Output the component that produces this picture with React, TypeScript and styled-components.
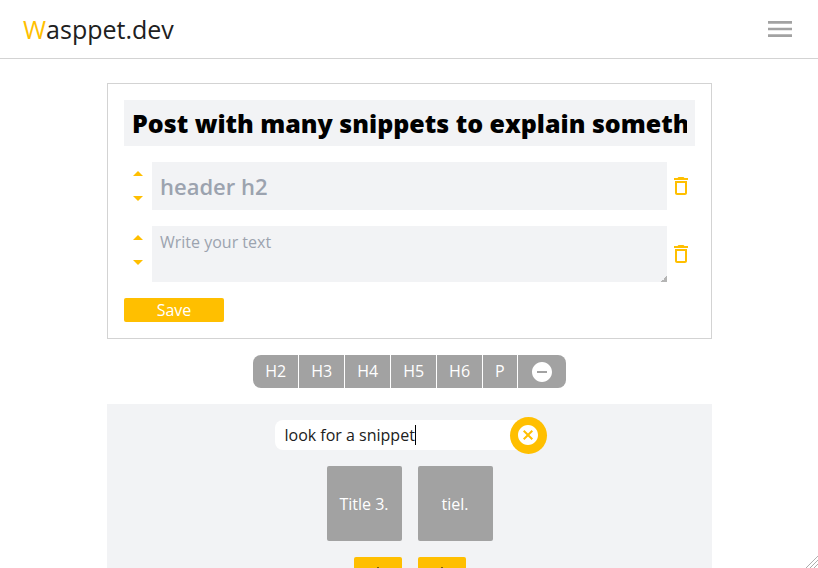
import React, { useState } from 'react';
import styled, { createGlobalStyle } from 'styled-components';
import {
  MdArrowBack,
  MdArrowDropDown,
  MdArrowDropUp,
  MdArrowForward,
  MdCancel,
  MdDeleteOutline,
  MdMenu,
  MdRemoveCircle,
} from 'react-icons/md';

const yellow = '#ffbf00';
const gray = '#a2a2a2';
const light = '#f2f3f5';
const line = '#d3d3d3';

const GlobalStyle = createGlobalStyle`
  *, *::before, *::after { box-sizing: border-box; }
  body {
    margin: 0;
    background: #fff;
    color: #202020;
    font-family: "Open Sans", "Noto Sans", sans-serif;
    font-size: 16px;
    line-height: 24px;
  }
  button, input, textarea { font: inherit; }
  button { border: 0; padding: 0; cursor: pointer; }
  svg { display: block; }
`;

const Page = styled.div`
  position: relative;
  height: 100vh;
  overflow: hidden;
`;

const Header = styled.header`
  display: flex;
  align-items: center;
  justify-content: space-between;
  padding: 12px 22px 12px 23px;
  border-bottom: 1px solid ${line};
`;

const Logo = styled.a`
  color: inherit;
  font-size: 25px;
  line-height: 34px;
  text-decoration: none;
`;

const LogoInitial = styled.span`
  color: ${yellow};
`;

const IconButton = styled.button<{ $color?: string }>`
  flex: none;
  background: none;
  color: ${({ $color }) => $color ?? yellow};
`;

const Main = styled.main`
  display: flex;
  flex-direction: column;
  align-items: center;
  gap: 16px;
  padding: 24px 106px 0 107px;
`;

const Editor = styled.form`
  display: flex;
  flex-direction: column;
  align-items: flex-start;
  gap: 16px;
  width: 100%;
  padding: 16px;
  border: 1px solid ${line};
`;

const TitleInput = styled.input`
  width: 100%;
  height: 46px;
  padding: 0 8px;
  border: 0;
  outline: 0;
  background: ${light};
  color: #000;
  font-size: 25px;
  font-weight: 800;
`;

const Row = styled.div`
  display: grid;
  grid-template-columns: 28px 1fr 28px;
  width: 100%;
  justify-items: center;
  align-items: center;
`;

const Movers = styled.div`
  display: flex;
  flex-direction: column;
  align-self: start;
`;

const HeadingInput = styled.input`
  width: 100%;
  height: 48px;
  padding: 0 8px;
  border: 0;
  outline: 0;
  background: ${light};
  font-size: 22px;
  font-weight: 600;
  &::placeholder { color: #9ca3af; }
`;

const TextArea = styled.textarea`
  display: block;
  width: 100%;
  height: 56px;
  padding: 4px 8px;
  border: 0;
  outline: 0;
  background: ${light};
  resize: vertical;
  &::placeholder { color: #9ca3af; }
  &::-webkit-resizer {
    background: linear-gradient(135deg, transparent 50%, #b4b4b4 50%) right bottom / 6px 6px no-repeat;
  }
`;

const SaveButton = styled.button`
  width: 100px;
  height: 24px;
  border-radius: 2px;
  background: ${yellow};
  color: #fff;
`;

const Toolbar = styled.div`
  display: flex;
  height: 33px;
  border-radius: 8px;
  overflow: hidden;
  background: ${gray};
`;

const Tool = styled.button<{ $icon?: boolean }>`
  padding: ${({ $icon }) => ($icon ? '5px 12px 4px' : '4px 12px 5px')};
  background: none;
  color: #fff;
  & + & { border-left: 1px solid #fff; }
`;

const Snippets = styled.section`
  display: flex;
  flex-direction: column;
  align-items: center;
  gap: 16px;
  width: 100%;
  padding: 16px;
  background: ${light};
`;

const Search = styled.div`
  position: relative;
  display: flex;
  align-items: center;
  height: 30px;
  margin-left: 2px;
`;

const SearchInput = styled.input<{ $caret: string }>`
  width: 253px;
  height: 30px;
  margin-right: -18px;
  padding: 0 10px;
  border: 0;
  outline: 0;
  border-radius: 8px;
  background: #fff;
  color: #202020;
  caret-color: ${({ $caret }) => $caret};
`;

const Caret = styled.span`
  position: absolute;
  top: 5px;
  left: 140px;
  width: 1px;
  height: 20px;
  background: #000;
  pointer-events: none;
`;

const ClearButton = styled.button`
  z-index: 1;
  display: grid;
  place-items: center;
  width: 37px;
  height: 37px;
  border-radius: 50%;
  background: ${yellow};
  color: #fff;
`;

const Cards = styled.div`
  display: flex;
  gap: 16px;
`;

const Card = styled.button`
  width: 75px;
  height: 75px;
  border-radius: 2px;
  background: ${gray};
  color: #fff;
`;

const PageButton = styled.button`
  display: grid;
  place-items: center;
  width: 48px;
  height: 36px;
  border-radius: 2px;
  background: ${yellow};
  color: #000;
`;

const Grip = styled.svg`
  position: absolute;
  right: 0;
  bottom: 0;
`;

const initialQuery = 'look for a snippet';

function Movable({ name, children }: { name: string; children: React.ReactNode }) {
  return (
    <Row>
      <Movers>
        <IconButton type="button" aria-label={`Move ${name} up`}><MdArrowDropUp size={24} /></IconButton>
        <IconButton type="button" aria-label={`Move ${name} down`}><MdArrowDropDown size={24} /></IconButton>
      </Movers>
      {children}
      <IconButton type="button" aria-label={`Delete ${name}`}><MdDeleteOutline size={24} /></IconButton>
    </Row>
  );
}

export default function App() {
  const [title, setTitle] = useState('Post with many snippets to explain something');
  const [query, setQuery] = useState(initialQuery);
  const [touched, setTouched] = useState(false);

  const changeQuery = (next: string) => {
    setQuery(next);
    setTouched(true);
  };

  return (
    <Page>
      <GlobalStyle />
      <Header>
        <Logo href="#"><LogoInitial>W</LogoInitial>asppet.dev</Logo>
        <IconButton type="button" $color={gray} aria-label="Menu"><MdMenu size={32} /></IconButton>
      </Header>
      <Main>
        <Editor onSubmit={(e) => e.preventDefault()}>
          <TitleInput aria-label="Title" value={title} onChange={(e) => setTitle(e.target.value)} />
          <Movable name="header"><HeadingInput aria-label="Header" placeholder="header h2" /></Movable>
          <Movable name="text"><TextArea aria-label="Text" placeholder="Write your text" /></Movable>
          <SaveButton type="submit">Save</SaveButton>
        </Editor>
        <Toolbar role="toolbar" aria-label="Blocks">
          {['H2', 'H3', 'H4', 'H5', 'H6', 'P'].map((tag) => <Tool key={tag} type="button">{tag}</Tool>)}
          <Tool type="button" $icon aria-label="Hide snippets"><MdRemoveCircle size={24} /></Tool>
        </Toolbar>
        <Snippets>
          <Search>
            <SearchInput
              aria-label="Search"
              $caret={touched ? '#000' : 'transparent'}
              value={query}
              onFocus={() => setTouched(true)}
              onChange={(e) => changeQuery(e.target.value)}
            />
            {!touched && <Caret />}
            <ClearButton type="button" aria-label="Clear" onClick={() => changeQuery('')}><MdCancel size={24} /></ClearButton>
          </Search>
          <Cards>
            <Card type="button">Title 3.</Card>
            <Card type="button">tiel.</Card>
          </Cards>
          <Cards>
            <PageButton type="button" aria-label="Previous"><MdArrowBack size={24} /></PageButton>
            <PageButton type="button" aria-label="Next"><MdArrowForward size={24} /></PageButton>
          </Cards>
        </Snippets>
      </Main>
      <Grip width="12" height="12" viewBox="0 0 12 12" stroke="#8a8a8a" strokeDasharray="1 0.4" aria-hidden="true">
        <path d="M0 12 12 0M4 12l8-8M8 12l4-4" />
      </Grip>
    </Page>
  );
}
